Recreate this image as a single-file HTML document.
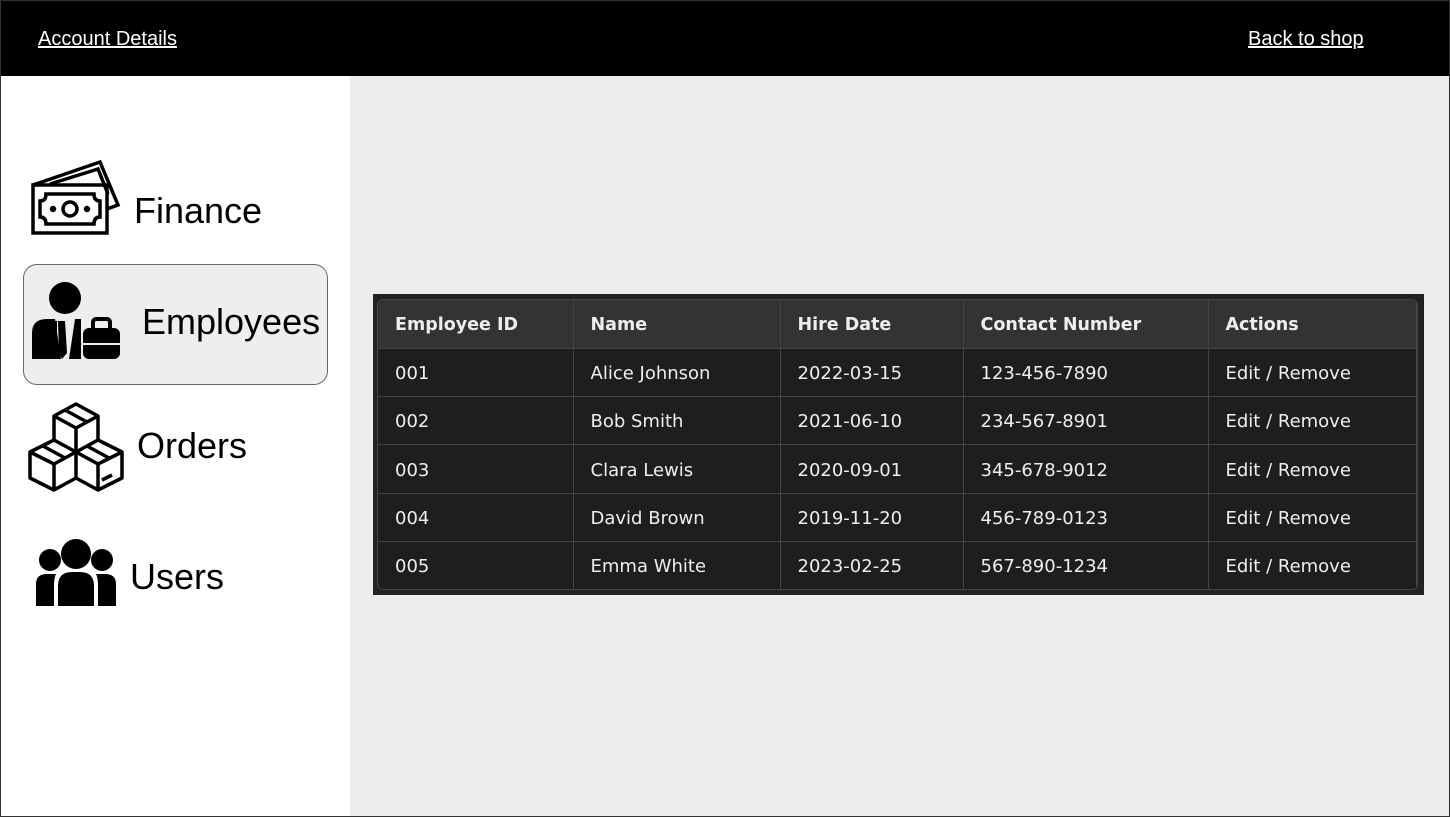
<!DOCTYPE html>
<html><head><meta charset="utf-8"><style>
*{margin:0;padding:0;box-sizing:border-box}
body{width:1450px;height:817px;position:relative;overflow:hidden;font-family:"Liberation Sans",sans-serif;background:#ececec}
.frame{position:absolute;inset:0;border:1px solid #333;pointer-events:none;z-index:5}
.top{position:absolute;left:0;top:0;width:1450px;height:76px;background:#000}
.top a{position:absolute;top:28px;color:#fff;font-size:20px;text-decoration:underline}
.side{position:absolute;left:0;top:76px;width:350px;height:741px;background:#fff}
.lbl{position:absolute;font-size:36px;color:#000}
.sel{position:absolute;left:23px;top:264px;width:305px;height:121px;background:#eee;border:1px solid #666;border-radius:14px}
.tw{position:absolute;left:373px;top:294px;width:1051px;height:301px;background:#222}
.tb{position:absolute;left:4px;top:5px;width:1041px;height:291px;border:1px solid #444;border-radius:6px;overflow:hidden;background:#1e1e1e}
table{border-collapse:collapse;width:100%;font-family:"DejaVu Sans","Liberation Sans",sans-serif;font-size:18px;color:#eee}
td,th{height:48.3px;border:1px solid #444;text-align:left;padding-left:17px;padding-top:2px;font-weight:normal}
th{background:#333;font-weight:bold;font-size:17.5px}
tr:first-child th{border-top:none}
td:first-child,th:first-child{border-left:none}
</style></head><body>
<div class="top"><a style="left:38px">Account Details</a><a style="left:1248px">Back to shop</a></div>
<div class="side">
<div class="sel" style="top:188px"></div>
</div>
<svg style="position:absolute;left:30px;top:157px" width="92" height="80" viewBox="0 0 92 80" fill="none" stroke="#000" stroke-width="3.5">
<rect x="3" y="28" width="74" height="48"/>
<path d="M3 28 L70 5 L88 48 L77 52"/><path d="M20 27 L68 12 L78 37"/>
<path d="M16 37 Q16 44 10 44 L10 60 Q16 60 16 67 L64 67 Q64 60 70 60 L70 44 Q64 44 64 37 Z"/>
<circle cx="40" cy="52" r="7"/><circle cx="23" cy="52" r="1.5" fill="#000"/><circle cx="57" cy="52" r="1.5" fill="#000"/>
</svg>
<div class="lbl" style="left:134px;top:190px">Finance</div>
<svg style="position:absolute;left:31px;top:281px" width="92" height="80" viewBox="0 0 92 80" fill="#000">
<circle cx="34" cy="17" r="16"/>
<path d="M1 78 L1 52 Q1 38 16 38 L24 38 L30 78 Z"/><path d="M44 38 L50 38 L50 78 L38 78 Z"/>
<path d="M27 40 L34 40 L36 72 L31 78 L28 72 Z" fill="#000"/>
<rect x="22" y="40" width="4" height="30"/>
<rect x="52" y="47" width="37" height="31" rx="6"/>
<rect x="62" y="38" width="17" height="12" rx="3" fill="none" stroke="#000" stroke-width="4"/>
<rect x="52" y="62" width="37" height="2" fill="#eee"/>
</svg>
<div class="lbl" style="left:142px;top:301px">Employees</div>
<svg style="position:absolute;left:28px;top:400px" width="96" height="96" viewBox="0 0 96 96" fill="none" stroke="#000" stroke-width="3.5" stroke-linejoin="round">
<path d="M48 4 L70 16 L70 40 L48 52 L26 40 L26 16 Z M26 16 L48 28 L70 16 M48 28 L48 52"/>
<path d="M26 40 L2 52 L2 78 L26 90 L48 78 L48 52 M2 52 L26 64 L48 52 M26 64 L26 90"/>
<path d="M70 40 L94 52 L94 78 L70 90 L48 78 M48 52 L70 64 L94 52 M70 64 L70 90"/>
<path d="M37 10 L59 22 M15 46 L37 58 M59 46 L81 58 M74 80 L84 75"/>
</svg>
<div class="lbl" style="left:137px;top:425px">Orders</div>
<svg style="position:absolute;left:35px;top:538px" width="82" height="70" viewBox="0 0 82 70" fill="#000">
<circle cx="41" cy="16" r="15"/><circle cx="15" cy="22" r="11"/><circle cx="67" cy="22" r="11"/>
<path d="M23 68 L23 48 Q23 34 37 34 L45 34 Q59 34 59 48 L59 68 Z"/>
<path d="M1 68 L1 46 Q1 36 12 36 L21 36 Q19 40 19 48 L19 68 Z"/>
<path d="M81 68 L81 46 Q81 36 70 36 L61 36 Q63 40 63 48 L63 68 Z"/>
</svg>
<div class="lbl" style="left:130px;top:556px">Users</div>
<div class="tw"><div class="tb"><table>
<colgroup><col style="width:195px"><col style="width:207px"><col style="width:183px"><col style="width:245px"><col></colgroup>
<tr><th>Employee ID</th><th>Name</th><th>Hire Date</th><th>Contact Number</th><th>Actions</th></tr>
<tr><td>001</td><td>Alice Johnson</td><td>2022-03-15</td><td>123-456-7890</td><td>Edit / Remove</td></tr>
<tr><td>002</td><td>Bob Smith</td><td>2021-06-10</td><td>234-567-8901</td><td>Edit / Remove</td></tr>
<tr><td>003</td><td>Clara Lewis</td><td>2020-09-01</td><td>345-678-9012</td><td>Edit / Remove</td></tr>
<tr><td>004</td><td>David Brown</td><td>2019-11-20</td><td>456-789-0123</td><td>Edit / Remove</td></tr>
<tr><td>005</td><td>Emma White</td><td>2023-02-25</td><td>567-890-1234</td><td>Edit / Remove</td></tr>
</table></div></div>
<div class="frame"></div>
</body></html>
